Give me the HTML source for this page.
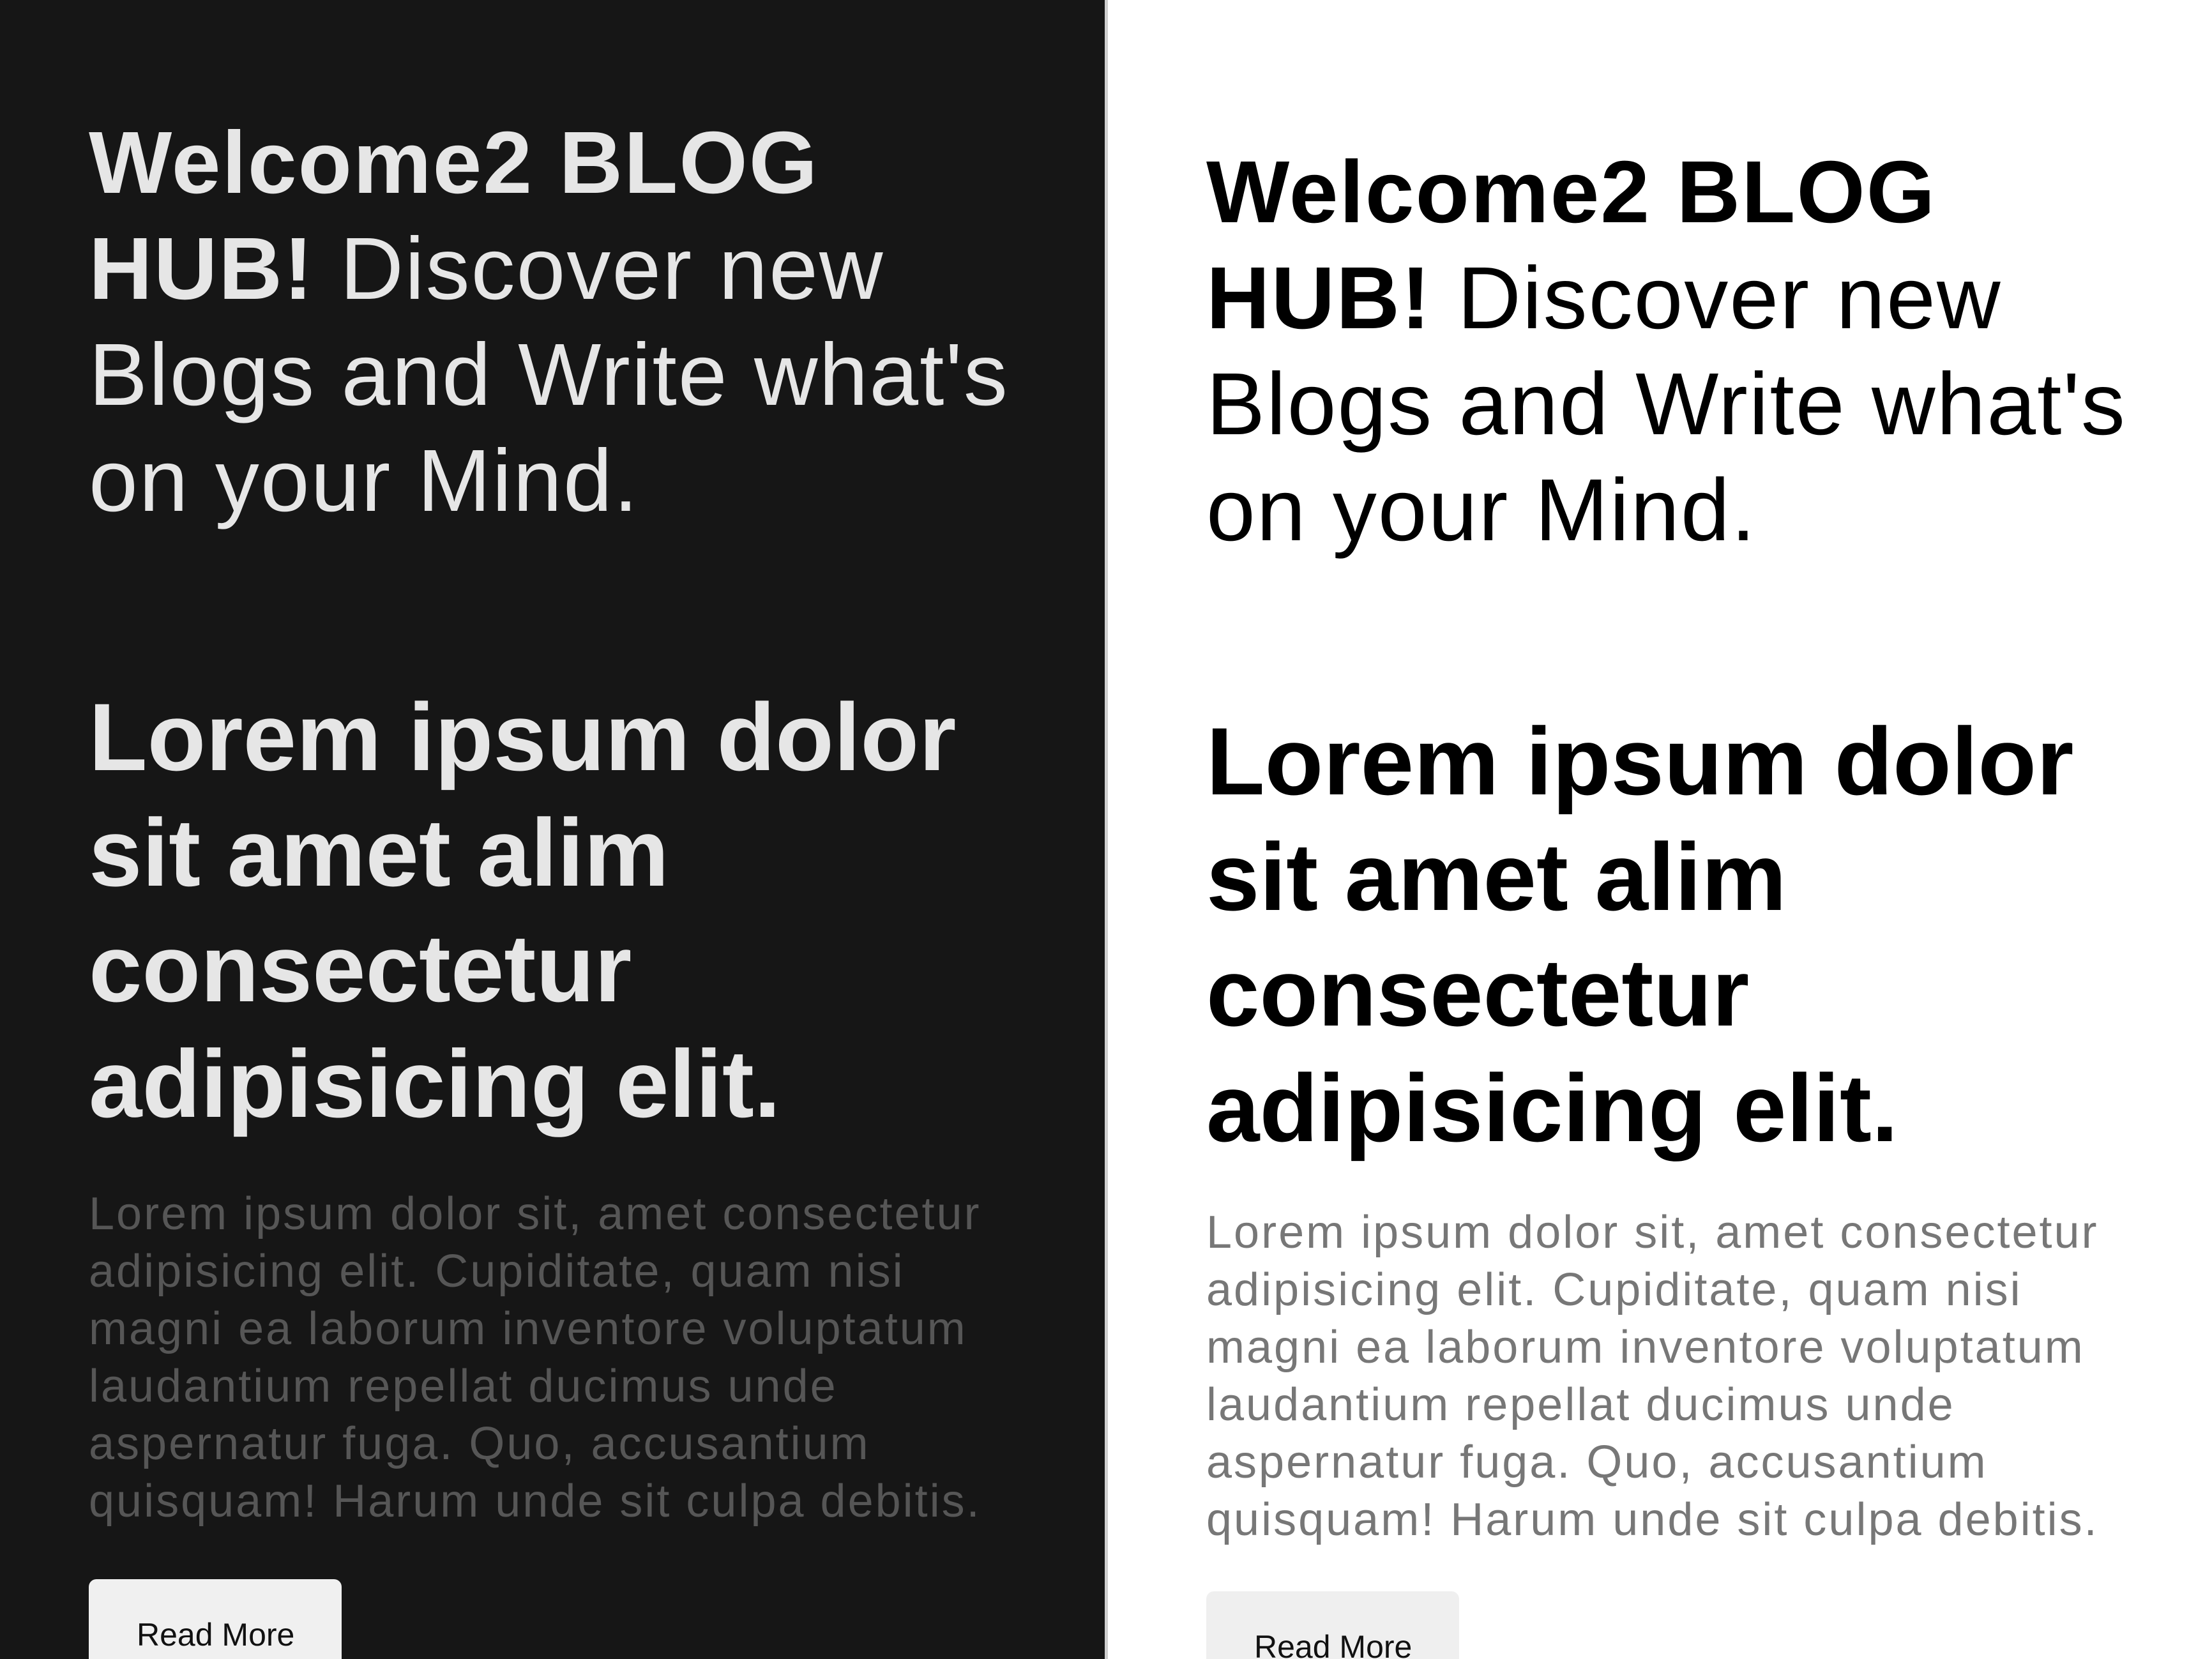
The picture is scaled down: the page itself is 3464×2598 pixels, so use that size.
<!DOCTYPE html>
<html><head><meta charset="utf-8"><style>
html,body{margin:0;padding:0;width:3464px;height:2598px;overflow:hidden;}
#w{width:3464px;height:2598px;position:relative;overflow:hidden;background:#fff;font-family:"Liberation Sans",Arial,sans-serif;}
.dark{position:absolute;left:0;top:0;width:1730px;height:2598px;background:#161616;}
.line{position:absolute;left:1730px;top:0;width:5px;height:2598px;background:#cfcfcf;}
.b{position:absolute;white-space:nowrap;}
.h1{font-size:138px;line-height:166px;letter-spacing:2px;}
.h2{font-size:150px;line-height:181px;font-weight:bold;letter-spacing:0px;}
.p{font-size:72px;line-height:90px;letter-spacing:3px;}
.btn{position:absolute;width:396px;border-radius:12px 12px 0 0;font-size:50px;line-height:60px;box-sizing:border-box;padding-top:57px;padding-left:75px;color:#111;overflow:hidden;}
</style></head><body><div id="w">
<div class="dark"></div><div class="line"></div>

<div class="b h1" style="left:139px;top:172px;color:#e6e6e6"><b>Welcome2 BLOG</b><br><b>HUB!</b> Discover new<br>Blogs and Write what's<br>on your Mind.</div>
<div class="b h2" style="left:139px;top:1064px;color:#e6e6e6">Lorem ipsum dolor<br>sit amet alim<br>consectetur<br>adipisicing elit.</div>
<div class="b p" style="left:139px;top:1856px;color:#565656">Lorem ipsum dolor sit, amet consectetur<br>adipisicing elit. Cupiditate, quam nisi<br>magni ea laborum inventore voluptatum<br>laudantium repellat ducimus unde<br>aspernatur fuga. Quo, accusantium<br>quisquam! Harum unde sit culpa debitis.</div>
<div class="btn" style="left:139px;top:2473px;height:125px;background:#f0f0f0">Read More</div>

<div class="b h1" style="left:1889px;top:218px;color:#000"><b>Welcome2 BLOG</b><br><b>HUB!</b> Discover new<br>Blogs and Write what's<br>on your Mind.</div>
<div class="b h2" style="left:1889px;top:1102px;color:#000">Lorem ipsum dolor<br>sit amet alim<br>consectetur<br>adipisicing elit.</div>
<div class="b p" style="left:1889px;top:1885px;color:#777">Lorem ipsum dolor sit, amet consectetur<br>adipisicing elit. Cupiditate, quam nisi<br>magni ea laborum inventore voluptatum<br>laudantium repellat ducimus unde<br>aspernatur fuga. Quo, accusantium<br>quisquam! Harum unde sit culpa debitis.</div>
<div class="btn" style="left:1889px;top:2492px;height:106px;background:#efefef">Read More</div>
</div></body></html>
